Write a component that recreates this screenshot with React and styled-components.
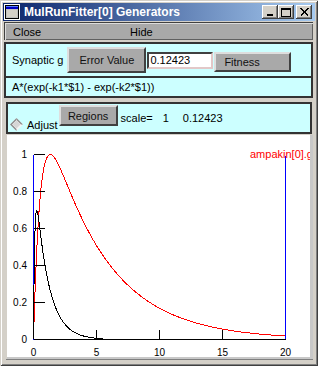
import React from "react";
import styled, { createGlobalStyle } from "styled-components";

const GlobalStyle = createGlobalStyle`
  html, body {
    margin: 0;
    padding: 0;
    background: #d4d0c8;
  }
  body {
    font-family: "Liberation Sans", Arial, sans-serif;
  }
`;

const Window = styled.div`
  width: 318px;
  height: 366px;
  box-sizing: border-box;
  padding: 3px;
  background: #d4d0c8;
  box-shadow: inset 1px 1px #d4d0c8, inset -1px -1px #404040,
    inset 2px 2px #ffffff, inset -2px -2px #808080;
  display: flex;
  flex-direction: column;
`;

const TitleBar = styled.div`
  height: 18px;
  flex: none;
  display: flex;
  align-items: center;
  padding: 0 3px 0 1px;
  background: linear-gradient(to right, #0a246a, #a6caf0);
`;

const TitleText = styled.span`
  flex: 1;
  margin-left: 4px;
  color: #ffffff;
  font-weight: bold;
  font-size: 12px;
  white-space: nowrap;
`;

const CaptionButton = styled.div`
  width: 16px;
  height: 14px;
  box-sizing: border-box;
  margin-left: ${(p) => p.$gap || 0}px;
  background: #d4d0c8;
  box-shadow: inset -1px -1px #404040, inset 1px 1px #ffffff,
    inset -2px -2px #808080;
  display: flex;
  align-items: center;
  justify-content: center;
`;

const Body = styled.div`
  flex: 1;
  display: flex;
  flex-direction: column;
  margin: 1px 2px 3px 1px;
`;

const MenuBar = styled.div`
  height: 18px;
  flex: none;
  box-sizing: border-box;
  display: flex;
  align-items: center;
  padding-left: 8px;
  background: #a9a9a9;
  border-top: 1px solid #404040;
  border-left: 1px solid #404040;
  box-shadow: inset 1px 1px #dcdcdc, inset -1px -1px #606060;
  font-size: 11px;
  color: #000;
`;

const MenuItem = styled.span`
  width: ${(p) => p.$w}px;
`;

const Group = styled.div`
  flex: none;
  margin-top: 2px;
  border: 2px solid #333333;
  background: #ccffff;
`;

const Row = styled.div`
  height: ${(p) => p.$h}px;
  display: flex;
  align-items: center;
  padding-left: 6px;
  font-size: 11px;
  color: #000;
  white-space: nowrap;
`;

const Divider = styled.div`
  height: 2px;
  background: #333333;
`;

const Button = styled.button`
  flex: none;
  box-sizing: border-box;
  width: ${(p) => p.$w}px;
  height: ${(p) => p.$h}px;
  margin: ${(p) => p.$m || "0"};
  align-self: ${(p) => p.$self || "center"};
  padding: 0 0 0 ${(p) => p.$pl || 0}px;
  text-align: ${(p) => (p.$pl ? "left" : "center")};
  background: #a9a9a9;
  border: 2px solid;
  border-color: #dedede #404040 #404040 #dedede;
  font: 11px "Liberation Sans", Arial, sans-serif;
  color: #111111;
`;

const ValueField = styled.input`
  flex: none;
  box-sizing: border-box;
  width: 66px;
  height: 17px;
  margin-left: 1px;
  padding: 0 0 0 1px;
  border: 2px solid;
  border-color: #404040 #e2c8c8 #e2c8c8 #404040;
  background: #ffffff;
  font: 11px "Liberation Sans", Arial, sans-serif;
  color: #000;
  outline: none;
`;

const Lower = styled.div`
  flex: 1;
  display: flex;
  flex-direction: column;
  margin: 4px 0 0 2px;
  border-bottom: 1px solid #808080;
`;

const AdjustPanel = styled.div`
  height: 32px;
  flex: none;
  box-sizing: border-box;
  margin-right: 1px;
  border: 2px solid #333333;
  background: #ccffff;
  display: flex;
  align-items: flex-start;
  padding-left: 2px;
  font-size: 11px;
  color: #000;
  white-space: nowrap;
`;

const Diamond = styled.svg`
  flex: none;
  margin-top: 14px;
`;

const Label = styled.span`
  line-height: 13px;
  margin-top: ${(p) => p.$top}px;
  margin-left: ${(p) => p.$left || 0}px;
`;

const PlotFrame = styled.div`
  flex: 1;
  margin: 1px 0 0 1px;
  background: #ffffff;
  border-right: 3px solid #c8c8c8;
  border-bottom: 2px solid #c8c8c8;
  overflow: hidden;
`;

const X0 = 26.5;
const Y0 = 204.5;
const sx = (t) => X0 + t * 12.6;
const sy = (v) => Y0 - v * 185;

function curve(f, t1, step) {
  let d = "";
  for (let t = 0; t <= t1 + 1e-9; t += step) {
    d += (d ? " L" : "M") + sx(t).toFixed(2) + " " + sy(f(t)).toFixed(2);
  }
  return d;
}

const rawRed = (t) => Math.exp(-0.22 * t) - Math.exp(-1.8 * t);
let redPeak = 0;
for (let t = 0; t < 5; t += 0.001) redPeak = Math.max(redPeak, rawRed(t));
const redPath = curve((t) => rawRed(t) / redPeak, 20, 0.02);
const blackPath = curve((t) => Math.exp(-t) - Math.exp(-10 * t), 5.5, 0.01);

const yTicks = [1, 0.8, 0.6, 0.4, 0.2];
const yLabels = ["1", "0.8", "0.6", "0.4", "0.2", "0"];
const xLabels = [0, 5, 10, 15, 20];

function Plot() {
  return (
    <svg width="303" height="222" style={{ display: "block" }}>
      <g fontFamily="'Liberation Sans', Arial, sans-serif" fontSize="10" fill="#000">
        {yLabels.map((l, i) => (
          <text key={l} x="20" y={sy(1 - i * 0.2) + 3.5} textAnchor="end">
            {l}
          </text>
        ))}
        {xLabels.map((v) => (
          <text key={v} x={sx(v)} y="221" textAnchor="middle">
            {v}
          </text>
        ))}
      </g>
      <g stroke="#0000ff" strokeWidth="1" shapeRendering="crispEdges">
        <line x1={X0} y1={sy(1)} x2={X0} y2={Y0} />
        <line x1={sx(20)} y1={sy(1) + 1} x2={sx(20)} y2={Y0} />
      </g>
      <path d={redPath} fill="none" stroke="#ff0000" strokeWidth="1" shapeRendering="crispEdges" />
      <path d={blackPath} fill="none" stroke="#000" strokeWidth="1" shapeRendering="crispEdges" />
      <g stroke="#000" strokeWidth="1" shapeRendering="crispEdges">
        <line x1={X0} y1={Y0} x2={sx(20)} y2={Y0} />
        {yTicks.map((v) => (
          <line key={v} x1={X0} y1={sy(v)} x2={X0 + 11} y2={sy(v)} />
        ))}
        {[5, 10, 15].map((v) => (
          <line key={v} x1={sx(v)} y1={Y0} x2={sx(v)} y2={Y0 - 10} />
        ))}
      </g>
      <text
        x="243"
        y="23"
        fill="#ff0000"
        fontSize="11"
        fontFamily="'Liberation Sans', Arial, sans-serif"
      >
        ampakin[0].g
      </text>
    </svg>
  );
}

function WindowIcon() {
  return (
    <svg width="16" height="16" viewBox="0 0 16 16">
      <rect x="0" y="0" width="16" height="16" fill="#ffffff" />
      <rect x="1.5" y="1.5" width="13" height="13" fill="#c0c0c0" stroke="#000" />
      <rect x="2" y="2" width="12" height="3" fill="#0000c0" />
      <line x1="2" y1="2.5" x2="14" y2="2.5" stroke="#5a7cff" />
      <rect x="3" y="6" width="10" height="7" fill="#d4d0c8" />
    </svg>
  );
}

export default function App() {
  return (
    <>
      <GlobalStyle />
      <Window>
        <TitleBar>
          <WindowIcon />
          <TitleText>MulRunFitter[0] Generators</TitleText>
          <CaptionButton>
            <svg width="8" height="8">
              <rect x="1" y="6" width="6" height="2" fill="#000" />
            </svg>
          </CaptionButton>
          <CaptionButton>
            <svg width="10" height="9">
              <rect x="0.5" y="0.5" width="9" height="8" fill="none" stroke="#000" />
              <line x1="0" y1="1.5" x2="10" y2="1.5" stroke="#000" />
            </svg>
          </CaptionButton>
          <CaptionButton $gap={2}>
            <svg width="9" height="8">
              <path d="M1 0.5 L8 7.5 M0.5 0.5 L7.5 7.5 M8 0.5 L1 7.5 M8.5 0.5 L1.5 7.5" stroke="#000" strokeWidth="1" shapeRendering="crispEdges" />
            </svg>
          </CaptionButton>
        </TitleBar>
        <Body>
          <MenuBar>
            <MenuItem $w={117}>Close</MenuItem>
            <MenuItem $w={40}>Hide</MenuItem>
          </MenuBar>
          <Group>
            <Row $h={32}>
              <span>Synaptic g</span>
              <Button $w={79} $h={26} $m="0 0 0 4px">
                Error Value
              </Button>
              <ValueField readOnly value="0.12423" />
              <Button $w={77} $h={20} $m="8px 0 0 1px" $self="flex-start" $pl={8}>
                Fitness
              </Button>
            </Row>
            <Divider />
            <Row $h={18}>A*(exp(-k1*$1) - exp(-k2*$1))</Row>
          </Group>
          <Lower>
            <AdjustPanel>
              <Diamond width="13" height="13" viewBox="0 0 13 13">
                <polygon points="6.5,0 13,6.5 6.5,13 0,6.5" fill="#f4f4f4" />
                <polygon points="6.5,0 0,6.5 6.5,13 6.5,11 2,6.5 6.5,2" fill="#8c8c8c" />
                <polygon points="6.5,0 13,6.5 11,6.5 6.5,2" fill="#8c8c8c" />
                <polygon points="6.5,2.5 10.5,6.5 6.5,10.5 2.5,6.5" fill="#d6d6d6" />
              </Diamond>
              <Label $top={15} $left={4}>
                Adjust
              </Label>
              <Button $w={59} $h={21} $m="1px 0 0 1px" $self="flex-start">
                Regions
              </Button>
              <Label $top={8} $left={3}>
                scale=
              </Label>
              <Label $top={8} $left={10}>
                1
              </Label>
              <Label $top={8} $left={14}>
                0.12423
              </Label>
            </AdjustPanel>
            <PlotFrame>
              <Plot />
            </PlotFrame>
          </Lower>
        </Body>
      </Window>
    </>
  );
}
